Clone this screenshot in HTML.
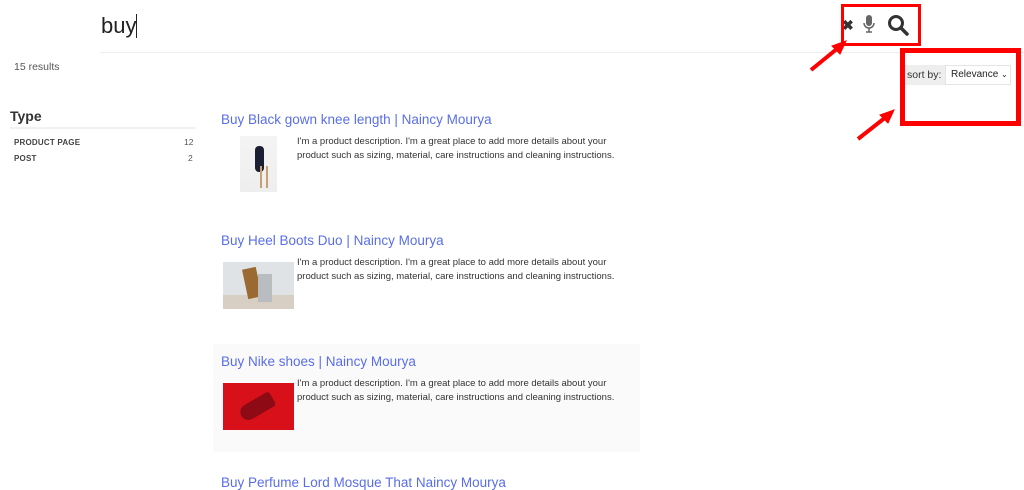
<!DOCTYPE html>
<html><head><meta charset="utf-8"><style>
*{margin:0;padding:0;box-sizing:border-box}
body{width:1024px;height:480px;overflow:hidden;background:#fff;font-family:"Liberation Sans",Arial,sans-serif;position:relative}
.a{position:absolute}
.t{position:absolute;color:#5a6ee8;font-size:13.5px;white-space:nowrap}
.d{position:absolute;color:#333;font-size:9.5px;line-height:14px;width:340px}
.r{font-size:8px;font-weight:bold;color:#444;letter-spacing:.2px}
</style></head><body>
<div class="a" style="left:101px;top:13px;font-size:22px;color:#222">buy<span style="display:inline-block;width:1px;height:24px;background:#222;vertical-align:-5px"></span></div>
<div class="a" style="left:100px;top:52px;width:924px;height:1px;background:#eee"></div>
<div class="a" style="left:842px;top:17px;font-size:14px;font-weight:bold;color:#333">✖</div>
<svg class="a" style="left:862px;top:14px" width="14" height="20" viewBox="0 0 14 20"><rect x="4" y="1" width="6" height="11" rx="3" fill="#666"/><path d="M2 9a5 5 0 0 0 10 0M7 14v4M4 18h6" stroke="#666" stroke-width="1.5" fill="none"/></svg>
<svg class="a" style="left:887px;top:14px" width="22" height="22" viewBox="0 0 22 22"><circle cx="9" cy="9" r="6.5" stroke="#333" stroke-width="3" fill="none"/><path d="M14 14l6 6" stroke="#333" stroke-width="3.5" stroke-linecap="round"/></svg>
<div class="a" style="left:841px;top:4px;width:80px;height:42px;border:3px solid #f00"></div>
<div class="a" style="left:900px;top:48px;width:121px;height:78px;border:5px solid #f00"></div>
<svg class="a" style="left:0;top:0" width="1024" height="480"><g stroke="#f00" stroke-width="4" fill="#f00"><line x1="811" y1="70" x2="838" y2="48"/><polygon points="846,41 832,46 840,54" stroke-width="1"/><line x1="858" y1="139" x2="886" y2="117"/><polygon points="894,110 880,115 888,123" stroke-width="1"/></g></svg>
<div class="a" style="left:14px;top:61px;font-size:10.5px;color:#555">15 results</div>
<div class="a" style="left:905px;top:65px;width:40px;height:20px;background:#eee;font-size:10.5px;color:#333;line-height:20px;padding-left:2px">sort by:</div>
<div class="a" style="left:945px;top:65px;width:66px;height:20px;border:1px solid #e5e5e5;background:#fff;font-size:10px;color:#222;line-height:18px;padding-left:5px">Relevance <span style="font-size:8px">⌄</span></div>
<div class="a" style="left:10px;top:108px;font-size:14px;font-weight:bold;color:#333">Type</div>
<div class="a" style="left:10px;top:127px;width:186px;height:2px;background:#f2f2f2"></div>
<div class="a r" style="left:14px;top:138px">PRODUCT PAGE</div><div class="a" style="left:184px;top:137px;font-size:8.5px;color:#555">12</div>
<div class="a r" style="left:14px;top:154px">POST</div><div class="a" style="left:188px;top:153px;font-size:8.5px;color:#555">2</div>
<div class="t" style="left:221px;top:112px">Buy Black gown knee length | Naincy Mourya</div>
<div class="a" style="left:240px;top:136px;width:37px;height:56px;background:linear-gradient(#f4f4f4,#eee)"><div class="a" style="left:15px;top:10px;width:9px;height:26px;background:#1b1f33;border-radius:4px"></div><div class="a" style="left:20px;top:30px;width:8px;height:22px;border-left:2px solid #c9a070;border-right:2px solid #c9a070"></div></div>
<div class="d" style="left:297px;top:135px">I'm a product description. I'm a great place to add more details about your product such as sizing, material, care instructions and cleaning instructions.</div>
<div class="t" style="left:221px;top:233px">Buy Heel Boots Duo | Naincy Mourya</div>
<div class="a" style="left:223px;top:262px;width:71px;height:47px;background:linear-gradient(#dfe3e6 70%,#d8cfc4 70%)"><div class="a" style="left:22px;top:6px;width:14px;height:30px;background:#9a6a32;transform:rotate(-12deg)"></div><div class="a" style="left:35px;top:12px;width:14px;height:28px;background:#b9bcc0"></div></div>
<div class="d" style="left:297px;top:256px">I'm a product description. I'm a great place to add more details about your product such as sizing, material, care instructions and cleaning instructions.</div>
<div class="a" style="left:213px;top:344px;width:427px;height:108px;background:#fafafa"></div>
<div class="t" style="left:221px;top:354px">Buy Nike shoes | Naincy Mourya</div>
<div class="a" style="left:223px;top:383px;width:71px;height:47px;background:#d8101a"><div class="a" style="left:16px;top:16px;width:36px;height:16px;background:#8e0a14;border-radius:10px 4px 4px 10px;transform:rotate(-30deg)"></div></div>
<div class="d" style="left:297px;top:377px">I'm a product description. I'm a great place to add more details about your product such as sizing, material, care instructions and cleaning instructions.</div>
<div class="t" style="left:221px;top:475px">Buy Perfume Lord Mosque That Naincy Mourya</div>
</body></html>
